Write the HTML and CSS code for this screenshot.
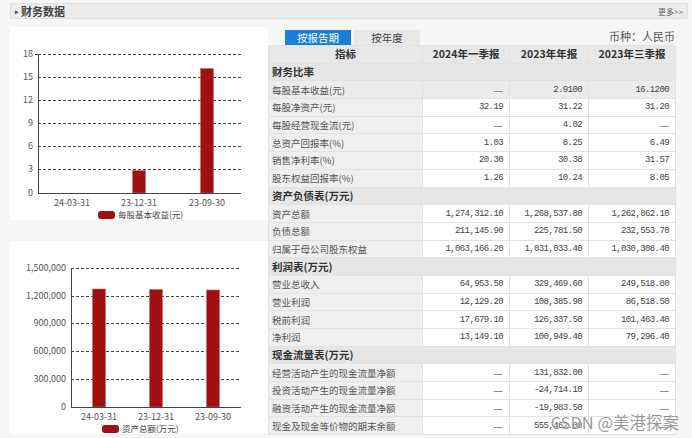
FILE: index.html
```html
<!DOCTYPE html>
<html lang="zh">
<head>
<meta charset="utf-8">
<link rel="stylesheet" href="styles.css">
</head>
<body>
<div class="bar">
  <span class="bar-title"><span class="tri">▸</span>财务数据</span>
  <span class="more">更多&gt;&gt;</span>
</div>
<div class="main">
  <div class="charts">
    <div class="panel">
      <svg width="258" height="193" viewBox="0 0 258 193" class="chart">
        <g class="grid">
          <line x1="28" y1="27.5" x2="231" y2="27.5"/>
          <line x1="28" y1="50.5" x2="231" y2="50.5"/>
          <line x1="28" y1="73.5" x2="231" y2="73.5"/>
          <line x1="28" y1="96.5" x2="231" y2="96.5"/>
          <line x1="28" y1="119.5" x2="231" y2="119.5"/>
          <line x1="28" y1="142.5" x2="231" y2="142.5"/>
        </g>
        <g class="ylab">
          <text x="23" y="30">18</text>
          <text x="23" y="53">15</text>
          <text x="23" y="76">12</text>
          <text x="23" y="99">9</text>
          <text x="23" y="122">6</text>
          <text x="23" y="145">3</text>
          <text x="23" y="169">0</text>
        </g>
        <rect class="barr" x="122.5" y="143.5" width="13" height="22.5"/>
        <rect class="barr" x="190.5" y="41.5" width="13" height="124.5"/>
        <line class="axis" x1="28.5" y1="27" x2="28.5" y2="166"/>
        <line class="axis" x1="25" y1="27.5" x2="28.5" y2="27.5"/>
        <line class="axis" x1="28" y1="166.5" x2="231" y2="166.5"/>
        <g class="xlab">
          <text x="62" y="179">24-03-31</text>
          <text x="129" y="179">23-12-31</text>
          <text x="197" y="179">23-09-30</text>
        </g>
        <rect class="swatch" x="88" y="184" width="17" height="8" rx="3"/>
        <text class="legend" x="108" y="191">每股基本收益(元)</text>
      </svg>
    </div>
    <div class="panel">
      <svg width="258" height="193" viewBox="0 0 258 193" class="chart">
        <g class="grid">
          <line x1="61" y1="27.5" x2="231" y2="27.5"/>
          <line x1="61" y1="55.5" x2="231" y2="55.5"/>
          <line x1="61" y1="82.5" x2="231" y2="82.5"/>
          <line x1="61" y1="110.5" x2="231" y2="110.5"/>
          <line x1="61" y1="138.5" x2="231" y2="138.5"/>
        </g>
        <g class="ylab">
          <text x="56" y="30">1,500,000</text>
          <text x="56" y="58">1,200,000</text>
          <text x="56" y="85">900,000</text>
          <text x="56" y="113">600,000</text>
          <text x="56" y="141">300,000</text>
          <text x="56" y="169">0</text>
        </g>
        <rect class="barr" x="82.5" y="48" width="13" height="118"/>
        <rect class="barr" x="139.5" y="48.5" width="13" height="117.5"/>
        <rect class="barr" x="196.5" y="49" width="13" height="117"/>
        <line class="axis" x1="61.5" y1="27" x2="61.5" y2="166"/>
        <line class="axis" x1="61" y1="166.5" x2="231" y2="166.5"/>
        <g class="xlab">
          <text x="89" y="179">24-03-31</text>
          <text x="146" y="179">23-12-31</text>
          <text x="203" y="179">23-09-30</text>
        </g>
        <rect class="swatch" x="92" y="184" width="17" height="8" rx="3"/>
        <text class="legend" x="112" y="191">资产总额(万元)</text>
      </svg>
    </div>
  </div>
  <div class="data">
    <div class="tabs">
      <span class="tab active">按报告期</span>
      <span class="tab">按年度</span>
      <span class="currency">币种：人民币</span>
    </div>
    <table class="fin">
      <colgroup><col class="c1"><col class="c2"><col class="c3"><col class="c4"></colgroup>
      <thead>
        <tr><th>指标</th><th>2024年一季报</th><th>2023年年报</th><th>2023年三季报</th></tr>
      </thead>
      <tbody>
        <tr class="sec"><td colspan="4">财务比率</td></tr>
        <tr class="hl"><td>每股基本收益(元)</td><td class="dash">—</td><td>2.9100</td><td>16.1200</td></tr>
        <tr><td>每股净资产(元)</td><td>32.19</td><td>31.22</td><td>31.20</td></tr>
        <tr><td>每股经营现金流(元)</td><td class="dash">—</td><td>4.02</td><td class="dash">—</td></tr>
        <tr><td>总资产回报率(%)</td><td>1.03</td><td>8.25</td><td>6.49</td></tr>
        <tr><td>销售净利率(%)</td><td>20.30</td><td>30.38</td><td>31.57</td></tr>
        <tr><td>股东权益回报率(%)</td><td>1.26</td><td>10.24</td><td>8.05</td></tr>
        <tr class="sec"><td colspan="4">资产负债表(万元)</td></tr>
        <tr><td>资产总额</td><td>1,274,312.10</td><td>1,268,537.80</td><td>1,262,862.10</td></tr>
        <tr><td>负债总额</td><td>211,145.90</td><td>225,781.50</td><td>232,553.70</td></tr>
        <tr><td>归属于母公司股东权益</td><td>1,063,166.20</td><td>1,031,033.40</td><td>1,030,308.40</td></tr>
        <tr class="sec"><td colspan="4">利润表(万元)</td></tr>
        <tr><td>营业总收入</td><td>64,953.50</td><td>329,469.60</td><td>249,518.80</td></tr>
        <tr><td>营业利润</td><td>12,129.20</td><td>108,385.90</td><td>86,518.50</td></tr>
        <tr><td>税前利润</td><td>17,679.10</td><td>126,337.50</td><td>101,463.40</td></tr>
        <tr><td>净利润</td><td>13,149.10</td><td>100,949.40</td><td>79,296.40</td></tr>
        <tr class="sec"><td colspan="4">现金流量表(万元)</td></tr>
        <tr><td>经营活动产生的现金流量净额</td><td class="dash">—</td><td>131,832.00</td><td class="dash">—</td></tr>
        <tr><td>投资活动产生的现金流量净额</td><td class="dash">—</td><td>-24,714.10</td><td class="dash">—</td></tr>
        <tr><td>融资活动产生的现金流量净额</td><td class="dash">—</td><td>-19,983.50</td><td class="dash">—</td></tr>
        <tr><td>现金及现金等价物的期末余额</td><td class="dash">—</td><td>555,462.00</td><td class="dash">—</td></tr>
      </tbody>
    </table>
  </div>
</div>
<div class="watermark">CSDN @美港探案</div>
</body>
</html>
```
FILE: styles.css
```css
html, body {
  margin: 0;
  padding: 0;
}
body {
  width: 692px;
  height: 438px;
  overflow: hidden;
  background: #f6f6f6;
  font-family: "Noto Sans CJK SC", "Liberation Sans", sans-serif;
  color: #333;
  position: relative;
}
.bar {
  margin: 3px 4px 0 10px;
  height: 14px;
  background: #ececec;
  border: 1px solid #e0e0e0;
  display: flex;
  align-items: center;
  justify-content: space-between;
  padding: 0 4px 0 4px;
}
.bar-title {
  font-size: 11px;
  font-weight: bold;
  color: #444;
  display: flex;
  align-items: center;
}
.tri {
  font-size: 7px;
  color: #555;
  margin-right: 2px;
}
.more {
  font-size: 8px;
  color: #666;
}
.main {
  display: flex;
  padding: 8px 0 0 10px;
}
.charts {
  width: 258px;
  display: flex;
  flex-direction: column;
  gap: 21px;
}
.panel {
  background: #fff;
  height: 193px;
}
.chart {
  display: block;
}
.grid line {
  stroke: #444;
  stroke-width: 1;
  stroke-dasharray: 3 2;
}
.axis {
  stroke: #444;
  stroke-width: 1;
}
.ylab text {
  font-size: 9px;
  fill: #555;
  text-anchor: end;
  font-family: "Noto Sans CJK SC", "Liberation Sans", sans-serif;
}
.xlab text {
  font-size: 9px;
  fill: #555;
  text-anchor: middle;
  font-family: "Noto Sans CJK SC", "Liberation Sans", sans-serif;
}
.barr {
  fill: #a01010;
  stroke: #c86a6a;
  stroke-width: 0.5;
}
.swatch {
  fill: #a01010;
}
.legend {
  font-size: 8.5px;
  fill: #444;
  font-family: "Noto Sans CJK SC", sans-serif;
}
.data {
  width: 407px;
}
.tabs {
  height: 18px;
  display: flex;
  align-items: flex-end;
  padding-left: 17px;
  gap: 3px;
}
.tab {
  width: 66px;
  height: 15px;
  background: #e8e8e8;
  font-size: 10.5px;
  color: #444;
  display: flex;
  align-items: center;
  justify-content: center;
}
.tab.active {
  background: #1a7fd6;
  color: #fff;
}
.currency {
  margin-left: auto;
  font-size: 11px;
  color: #555;
  height: 15px;
  line-height: 15px;
  align-self: center;
}
.fin {
  border-collapse: collapse;
  table-layout: fixed;
  width: 407px;
}
.c1 { width: 154px; }
.c2 { width: 87px; }
.c3 { width: 79px; }
.c4 { width: 87px; }
.fin th, .fin td {
  height: 16.7px;
  padding: 0 6px;
  border: 1px solid #e2e2e2;
  font-size: 9px;
  white-space: nowrap;
  overflow: hidden;
  line-height: 12px;
}
.fin th {
  background: #e8e8e8;
  font-size: 10.5px;
  font-weight: bold;
  color: #333;
  text-align: center;
}
.fin td {
  background: #fff;
  text-align: right;
  color: #444;
  font-family: "Liberation Mono", monospace;
  letter-spacing: -0.6px;
}
.fin td:first-child {
  background: #efefef;
  text-align: left;
  color: #555;
  font-size: 9.5px;
  font-family: "Noto Sans CJK SC", sans-serif;
  letter-spacing: 0;
  padding-left: 3px;
}
.fin td.dash {
  color: #777;
  font-size: 11px;
  font-family: "Noto Sans CJK SC", sans-serif;
  letter-spacing: 0;
}
.fin tr.hl td {
  background: #ececec;
}
.fin tr.sec td {
  background: #e6e6e6;
  font-weight: bold;
  color: #333;
  font-size: 10.5px;
}
.watermark {
  position: absolute;
  right: 13px;
  bottom: 4px;
  font-size: 16.5px;
  color: rgba(120, 120, 120, 0.75);
  font-family: "Noto Sans CJK SC", sans-serif;
  text-shadow: 0 0 2px #fff;
}
```
